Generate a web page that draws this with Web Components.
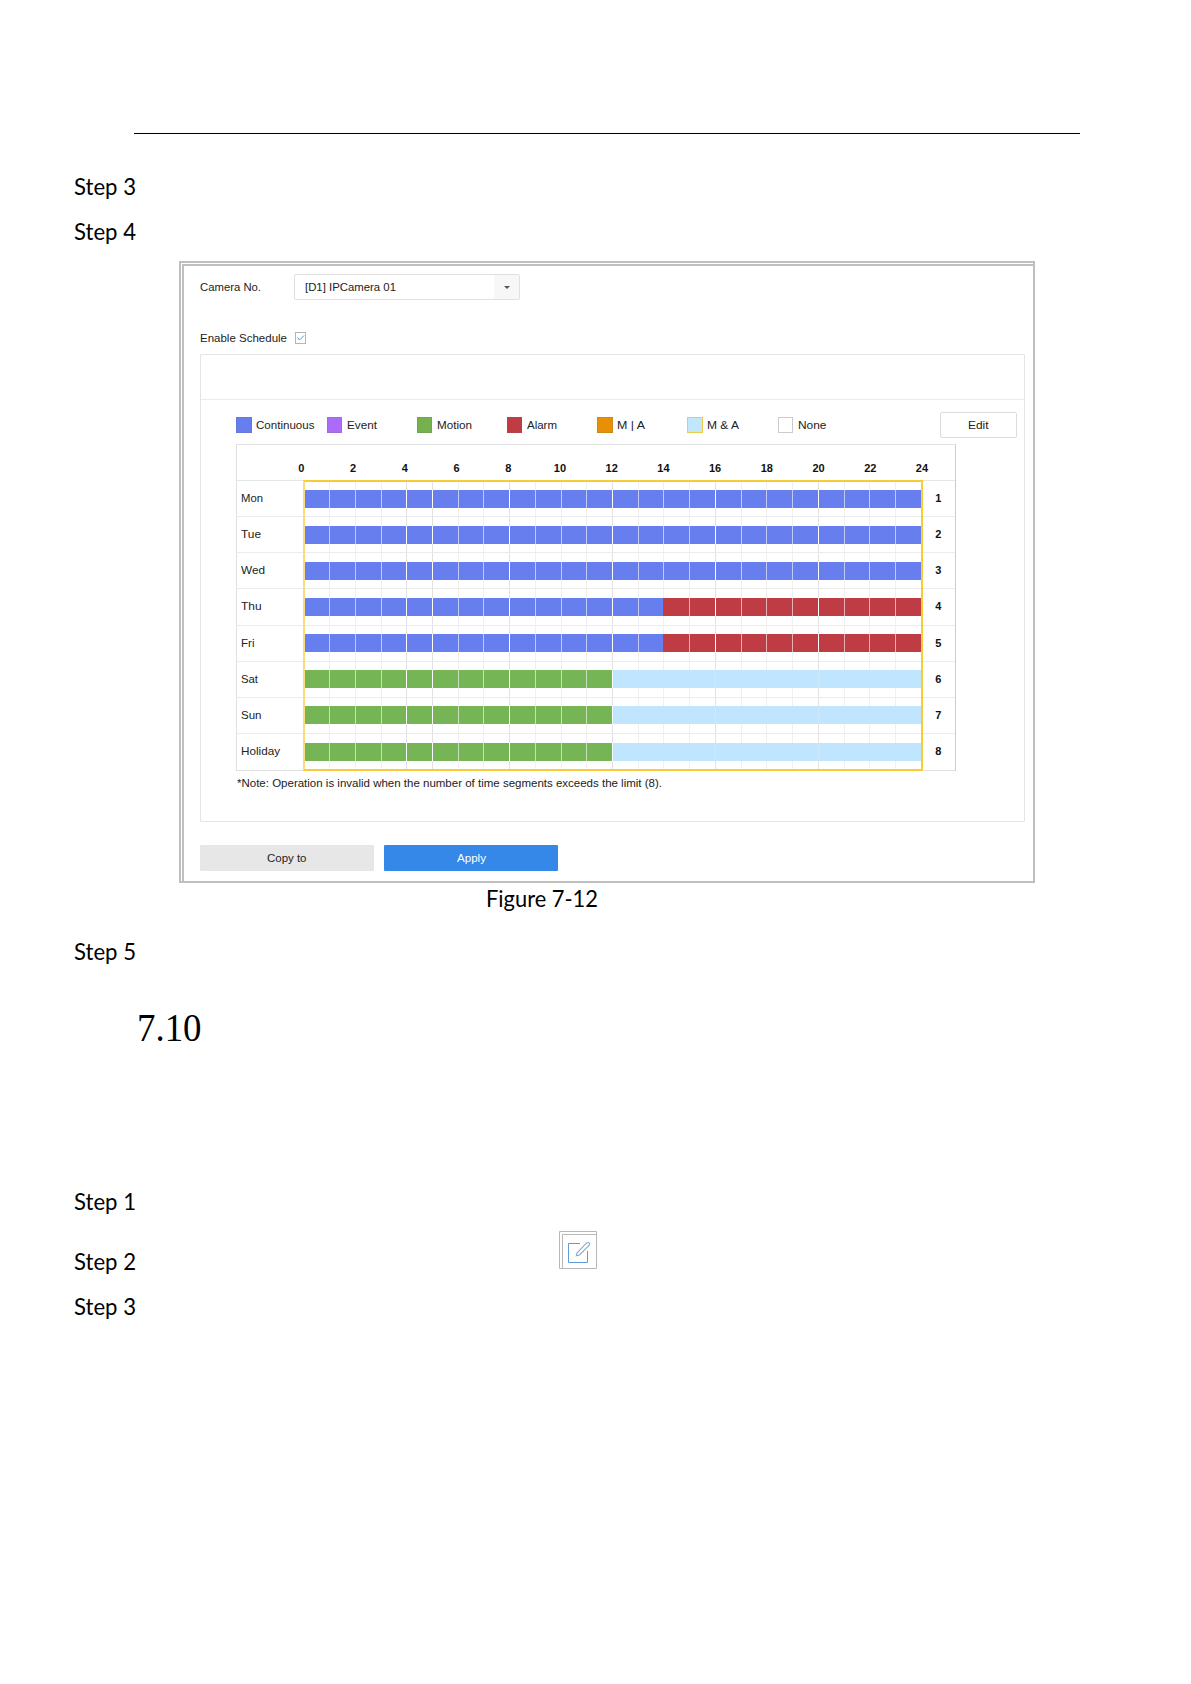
<!DOCTYPE html>
<html lang="en">
<head>
<meta charset="utf-8">
<title>Arming schedule</title>
<style>
html,body{margin:0;background:#fff}
body{height:1684px;overflow:hidden}
</style>
</head>
<body>
<manual-page></manual-page>
<script>
// Text run set to an exact advance width.
class FitText extends HTMLElement{
  connectedCallback(){
    if(this.shadowRoot)return;
    const r=this.attachShadow({mode:'open'});
    r.innerHTML='<style>:host{display:block;flex:none;white-space:nowrap}span{display:inline-block;transform-origin:0 50%}</style><span><slot></slot></span>';
    const s=r.querySelector('span'),w=+this.getAttribute('w'),n=s.getBoundingClientRect().width;
    this.style.width=w+'px';
    s.style.transform='scaleX('+(w/n)+')';
  }
}
class StepLabel extends HTMLElement{
  constructor(){super();this.attachShadow({mode:'open'}).innerHTML=`
  <style>:host{display:flex;align-items:flex-end;box-sizing:border-box;height:30px;padding-left:74px;font:23.500px/30px Lato,sans-serif;color:#000}</style>
  <fit-text w="62"><slot></slot></fit-text><slot name="extra"></slot>`}
}
class EditIcon extends HTMLElement{
  constructor(){super();this.attachShadow({mode:'open'}).innerHTML=`
  <style>:host{display:block;margin-left:423px;width:38px;height:38px;align-self:flex-start}svg{display:block}</style>
  <svg width="38" height="38" viewBox="0 0 38 38" fill="none">
  <path d="M.5.5H37.5V37.5H.5ZM3.5 37V3.5H37" stroke="#b8b8b8"/>
  <path d="M21 12.5H9.5V31.5H28.500V20" stroke="#5f9bdb"/>
  <path d="M18 21.800 27.300 12.300Q29.300 10.800 30.300 12T29.800 14.700L20.500 24 17.300 24.800Z" stroke="#8ba9cb" stroke-width="1.1"/></svg>`}
}
class CameraSelect extends HTMLElement{
  constructor(){super();this.attachShadow({mode:'open'}).innerHTML=`
  <style>:host{display:flex;box-sizing:border-box;width:226px;height:26px;border:1px solid #e0e0e0;border-radius:2px;align-items:center;padding-left:10px;color:#222}
  div{margin-left:auto;width:25px;height:24px;background:#f7f7f7;display:flex;align-items:center;justify-content:center}</style>
  <fit-text w="91"><slot></slot></fit-text><div><svg width="6" height="3"><path d="M0 0H6L3 3Z" fill="#555"/></svg></div>`}
}
class PushButton extends HTMLElement{
  constructor(){super();this.attachShadow({mode:'open'}).innerHTML=`
  <style>:host{display:flex;box-sizing:border-box;width:174px;height:26px;align-items:center;justify-content:center;background:#e7e7e7;border-radius:1px}
  :host([kind=primary]){background:#3587e8;color:#fff}
  :host([kind=outline]){width:77px;background:#fff;border:1px solid #dcdcdc;border-radius:2px}</style><slot></slot>`}
}
class LegendItem extends HTMLElement{
  constructor(){super();const r=this.attachShadow({mode:'open'});r.innerHTML=`
  <style>:host{display:flex;box-sizing:border-box;width:90.2px;height:16px;align-items:center;gap:4.500px}
  i{box-sizing:border-box;width:15.500px;height:16px;flex:none;background:var(--fill);border:1px solid var(--edge,rgba(110,110,110,.2))}</style><i></i><slot></slot>`}
}
class DayRow extends HTMLElement{
  constructor(){super();this.attachShadow({mode:'open'})}
  connectedCallback(){
    const c={c:'#667eee',m:'#76b556',a:'#c03c45',b:'#bfe6fe'};
    const [k1,h,k2]=(this.getAttribute('plan')||'c 24').split(' ');
    let cells='';
    for(let i=0;i<24;i++){
      const k=i<+h?k1:k2,major=(i+1)%4===0||i===4,edge=i===+h-1;
      const line=edge&&k2!=='b'&&h!=='24'?c[k2]:k==='b'?(major?'#d3e6f5':c.b):major?'#fff':'rgba(255,255,255,.6)';
      cells+=`<div class="h${major?' j':''}"><b style="background:${c[k]}"><u style="background:${i===23?c[k]:line}"></u></b></div>`;
    }
    this.shadowRoot.innerHTML=`<style>
    :host{display:flex;height:36.150px;box-sizing:border-box;border-bottom:1px solid #ececec;align-items:stretch}
    .l{width:67.500px;box-sizing:border-box;padding:0 0 0 4px;line-height:35px}
    .t{width:618px;display:flex}
    .h{flex:1;display:flex;align-items:center;background:linear-gradient(#f0f0f0,#f0f0f0) right/1px 100% no-repeat}
    .h.j{background-image:linear-gradient(#e2e2e2,#e2e2e2)}
    b{display:flex;justify-content:flex-end;width:100%;height:18px}u{width:1px;height:100%}
    .n{width:33.500px;display:flex;justify-content:center;align-items:center;font-weight:bold;font-size:11px;line-height:35px;color:#111}</style>
    <div class="l"><fit-text w="${this.getAttribute('w')}">${this.getAttribute('day')}</fit-text></div><div class="t">${cells}</div><div class="n">${this.getAttribute('n')}</div>`;
  }
}
class WeekTable extends HTMLElement{
  constructor(){super();
    const hours=[...Array(13)].map((_,i)=>`<div>${i*2}</div>`).join('');
    const days=[['Mon',22,'c 24 c'],['Tue',20,'c 24 c'],['Wed',24,'c 24 c'],['Thu',20.5,'c 14 a'],['Fri',13.5,'c 14 a'],['Sat',17,'m 12 b'],['Sun',20.5,'m 12 b'],['Holiday',39,'m 12 b']];
    this.attachShadow({mode:'open'}).innerHTML=`<style>
    :host{display:block;position:relative;box-sizing:border-box;width:720px;height:327px;border:1px solid #e0e0e0;border-right-color:#ccc}
    .head{display:flex;box-sizing:border-box;height:36px;padding:12px 0 0 38.500px;border-bottom:1px solid #e6e6e6;font-weight:bold;font-size:11px;line-height:23px;color:#111;overflow:hidden}
    .head div{width:51.730px;flex:none;text-align:center}
    .sel{position:absolute;left:66px;top:35px;width:620px;height:291px;box-sizing:border-box;border:2px solid #f8cc36;border-left-color:#fbdc7c}
    day-row:last-of-type{border-bottom-color:transparent}</style>
    <div class="head">${hours}</div>
    ${days.map((d,i)=>`<day-row day="${d[0]}" w="${d[1]}" plan="${d[2]}" n="${i+1}"></day-row>`).join('')}
    <div class="sel"></div>`}
}
class SchedulePanel extends HTMLElement{
  constructor(){super();this.attachShadow({mode:'open'}).innerHTML=`<style>
    :host{display:block;box-sizing:border-box;width:825px;height:468px;border:1px solid #e4e4e4;border-radius:1px}
    .tab{height:45px;box-sizing:border-box;border-bottom:1px solid #ebebeb}
    .legend{display:flex;align-items:center;height:26px;margin:12px 7.500px 6px 35.400px}
    push-button{margin-left:auto}
    week-table{margin-left:35px}
    .note{margin:5px 0 0 36px;line-height:14px}</style>
    <div class="tab"></div>
    <div class="legend">
    <legend-item style="--fill:#667eee"><fit-text w="58.500">Continuous</fit-text></legend-item>
    <legend-item style="--fill:#ac6bfb"><fit-text w="30">Event</fit-text></legend-item>
    <legend-item style="--fill:#76b150"><fit-text w="35">Motion</fit-text></legend-item>
    <legend-item style="--fill:#c03c45"><fit-text w="30">Alarm</fit-text></legend-item>
    <legend-item style="--fill:#e98f05"><fit-text w="28">M | A</fit-text></legend-item>
    <legend-item style="--fill:#c1e7fe;--edge:#eec94a"><fit-text w="32">M &amp; A</fit-text></legend-item>
    <legend-item style="--fill:#fff;--edge:#ccc"><fit-text w="28.500">None</fit-text></legend-item>
    <push-button kind="outline"><fit-text w="20.500">Edit</fit-text></push-button></div>
    <week-table></week-table>
    <div class="note"><fit-text w="425">*Note: Operation is invalid when the number of time segments exceeds the limit (8).</fit-text></div>`}
}
class DeviceShot extends HTMLElement{
  constructor(){super();this.attachShadow({mode:'open'}).innerHTML=`<style>
    :host{display:block;box-sizing:border-box;width:856px;height:622px;border:2px solid #bfbfbf;padding:1px 0 0 1px;font:11.500px/14px "Liberation Sans",Arial,sans-serif;color:#222}
    .in{box-sizing:border-box;height:617px;border:solid #bfbfbf;border-width:2px 0 0 2px;padding:8px 0 0 16px}
    .r{display:flex;align-items:center}
    .cam camera-select{margin-left:33px}
    .en{height:14px;margin-top:31px;gap:8px}
    .box{box-sizing:border-box;width:11px;height:12px;border:1px solid #b5b5b5;display:flex}
    schedule-panel{margin:9px 0 0}
    .act{gap:10px;margin-top:23px}</style>
    <div class="in">
    <div class="r cam"><fit-text w="61">Camera No.</fit-text><camera-select>[D1] IPCamera 01</camera-select></div>
    <div class="r en"><fit-text w="87">Enable Schedule</fit-text><div class="box"><svg width="9" height="10"><path d="M1.500 4.500 3.500 7 8 2.500" fill="none" stroke="#5795d8"/></svg></div></div>
    <schedule-panel></schedule-panel>
    <div class="r act"><push-button><fit-text w="39.500">Copy to</fit-text></push-button><push-button kind="primary"><fit-text w="29">Apply</fit-text></push-button></div>
    </div>`}
}
class ManualPage extends HTMLElement{
  constructor(){super();this.attachShadow({mode:'open'}).innerHTML=`<style>
    :host{display:flex;flex-direction:column;width:1191px;height:1684px;background:#fff;color:#000}
    hr{margin:133px 111px 0 134px;border:0;height:1px;flex:none;background:#000}
    step-label,device-shot,.fig,.sec{flex:none}
    .fig{height:28px;padding-left:486px;font:23.500px/30px Lato,sans-serif}
    .sec{height:40px;margin-top:41px;padding-left:137px;font:40px/41px "Palatino Linotype","Liberation Serif",serif}</style>
    <hr>
    <step-label style="margin-top:37px">Step 3</step-label>
    <step-label style="margin-top:15px">Step 4</step-label>
    <device-shot style="margin:15px 0 0 179px"></device-shot>
    <div class="fig"><fit-text w="112">Figure 7-12</fit-text></div>
    <step-label style="margin-top:25px">Step 5</step-label>
    <div class="sec"><fit-text w="64.500">7.10</fit-text></div>
    <step-label style="margin-top:139px">Step 1</step-label>
    <step-label style="margin-top:15px;height:45px">Step 2<edit-icon slot="extra"></edit-icon></step-label>
    <step-label style="margin-top:15px">Step 3</step-label>`}
}
for(const [n,c] of [['step-label',StepLabel],['edit-icon',EditIcon],['camera-select',CameraSelect],['push-button',PushButton],['legend-item',LegendItem],['day-row',DayRow],['week-table',WeekTable],['schedule-panel',SchedulePanel],['device-shot',DeviceShot],['manual-page',ManualPage],['fit-text',FitText]])customElements.define(n,c);
</script>
</body>
</html>
